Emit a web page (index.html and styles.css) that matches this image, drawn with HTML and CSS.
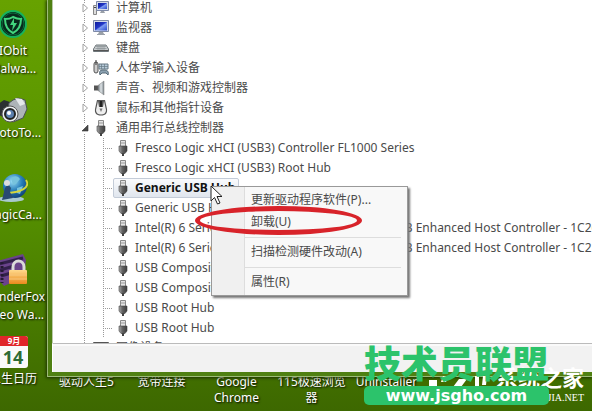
FILE: index.html
```html
<!DOCTYPE html>
<html lang="zh-CN">
<head>
	<meta charset="UTF-8">
	<title>设备管理器</title>
	<link rel="stylesheet" href="styles.css">
</head>
<body>
	<!-- shared device icons -->
	<svg class="defs" aria-hidden="true">
		<defs>
			<linearGradient id="dark" x1="0" x2="1"><stop offset="0" stop-color="#aaa"/><stop offset=".4" stop-color="#666"/><stop offset="1" stop-color="#3c3c3c"/></linearGradient>
			<linearGradient id="screen" x1="0" x2="1" y2="1"><stop offset="0" stop-color="#0a1a9c"/><stop offset=".45" stop-color="#2438c8"/><stop offset=".55" stop-color="#7d9cf0"/><stop offset="1" stop-color="#2b49cf"/></linearGradient>
			<linearGradient id="metal" x1="0" x2="1"><stop offset="0" stop-color="#6d757b"/><stop offset=".5" stop-color="#dfe5e8"/><stop offset="1" stop-color="#7d868c"/></linearGradient>
			<radialGradient id="globe" cx=".4" cy=".3" r=".8"><stop offset="0" stop-color="#9be0f8"/><stop offset=".5" stop-color="#257cb8"/><stop offset="1" stop-color="#0c3267"/></radialGradient>
			<linearGradient id="gold" x2="0" y2="1"><stop offset="0" stop-color="#ffd98c"/><stop offset="1" stop-color="#e98a1c"/></linearGradient>
			<symbol id="usb" viewBox="0 0 16 16">
				<path d="M5.500 .5h5v6h-5z" fill="#e4e4e4" stroke="#8a8a8a"/>
				<path d="M7 2v2M9 2v2" stroke="#999"/>
				<path d="M4 6h8v5l-2 2.500H6L4 11z" fill="url(#dark)" stroke="#444" stroke-width=".6"/>
				<path d="M7 13h2v3H7z" fill="#444"/>
			</symbol>
			<symbol id="monitor" viewBox="0 0 16 16">
				<path d="M.5 .5h15v11H.5z" fill="#d5dbe8" stroke="#7e8aa8"/>
				<path d="M2 2h12v8.500H2z" fill="url(#screen)"/>
				<path d="M6 12h4l1 2h1v1H4v-1h1z" fill="#9aa0a8"/>
			</symbol>
			<symbol id="computer" viewBox="0 0 16 16">
				<path d="M.5 5.500h3v9h-3z" fill="#ddd" stroke="#888"/>
				<path d="M1 7.500h2" stroke="#444"/>
				<path d="M3.500 1.500h12v9h-12z" fill="#d5dbe8" stroke="#7e8aa8"/>
				<path d="M5 3h9v6H5z" fill="url(#screen)"/>
				<path d="M8 11h3l1 2H7z" fill="#9aa0a8"/>
			</symbol>
			<symbol id="keyboard" viewBox="0 0 16 16">
				<path d="M3 5h10l2.500 4v2.500H.5V9z" fill="#c9cdcf" stroke="#6f777b"/>
				<path d="M3 6.500h10M2.500 8.500h11M5 5v5M7 5v5M9 5v5M11 5v5" stroke="#8b9396" stroke-width=".7"/>
				<path d="M.5 10.500h15" stroke="#555"/>
			</symbol>
			<symbol id="hid" viewBox="0 0 16 16">
				<rect x="1" y="2" width="4" height="11" rx="2" fill="#ccc" stroke="#555"/>
				<path d="M3 0v5" stroke="#333"/>
				<path d="M6 4h9v5H6z" fill="#b6c9d8" stroke="#667884"/>
				<path d="M6 6.500h9M8.500 4v5M11.500 4v5" stroke="#667884" stroke-width=".7"/>
				<path d="M7 15c-1-3 0-5 2-5h3c3 0 4 3 3 5l-2-2H9z" fill="#8ca2b1" stroke="#566b78"/>
			</symbol>
			<symbol id="speaker" viewBox="0 0 16 16">
				<path d="M1 5.500h4v5H1z" fill="#555"/>
				<path d="M5 5.500L11 1v14l-6-4.500z" fill="url(#metal)" stroke="#777" stroke-width=".5"/>
			</symbol>
			<symbol id="mouse" viewBox="0 0 16 16">
				<path d="M4 0h8l2 9c.5 4-1 6.500-6 6.500S1.500 13 2 9z" fill="#555"/>
				<path d="M5 1l-2 9c0 3 2 4.500 5 4.500s5-1.500 5-4.500l-2-9-1 6H6z" fill="#eee"/>
				<path d="M7 1h2v6H7z" fill="#222"/>
				<path d="M6.500 8.500h3L8 12z" fill="#777"/>
			</symbol>
			<symbol id="card" viewBox="0 0 16 16">
				<path d="M0 2h16l-2 4H2z" fill="#555"/>
			</symbol>
			<symbol id="closed" viewBox="0 0 9 10"><path d="M2 1v8l4.500-4z" fill="#fff" stroke="#a0a0a0"/></symbol>
			<symbol id="open" viewBox="0 0 9 10"><path d="M7 2v6H1z" fill="#484848" stroke="#333" stroke-width=".6"/></symbol>
		</defs>
	</svg>

	<main class="desktop">
		<aside class="shortcuts">
			<a class="shortcut" href="#">
				<svg viewBox="0 0 36 36"><circle cx="18" cy="18" r="13" fill="#08291c" stroke="#16b35c" stroke-width="2"/><circle cx="18" cy="18" r="11" fill="none" stroke="#0c6b3c"/><path d="M10 13q5 0 8-2 4 2 8 2 0 10-8 14-8-4-8-14z" fill="none" stroke="#42d57d" stroke-width="2"/><path d="M19 12l-4 7h3l-1 6 5-8h-3z" fill="#42d57d"/></svg>
				<span>IObit Malwa...</span>
			</a>
			<a class="shortcut" href="#">
				<svg viewBox="0 0 36 36"><path d="M2 17l7-5 9 3v14l-8 1-8-4z" fill="#2c3032"/><path d="M14 15l4-3 5-2 7 2 2 9-4 9-10 4-6-5z" fill="#aeb4b8" stroke="#4a5054"/><path d="M20 10l7 1 3 5-5 2z" fill="#e5e8ea"/><circle cx="15" cy="26" r="8" fill="#eceff1" stroke="#555"/><circle cx="15" cy="26" r="5" fill="#5b7fae" stroke="#222" stroke-width="2"/><circle cx="14" cy="25" r="2" fill="#fff"/></svg>
				<span>PhotoTo...</span>
			</a>
			<a class="shortcut" href="#">
				<svg viewBox="0 0 36 36"><ellipse cx="16" cy="29" rx="13" ry="3" fill="#a9c9cf"/><circle cx="20" cy="16" r="12" fill="url(#globe)"/><path d="M16 8q6-4 9 1l-4 5-3 1zM22 18l6-2-3 8-3-1z" fill="#77c3dd"/><path d="M31 10c5 7-5 13-21 13" fill="none" stroke="#d5d63c" stroke-width="2"/><path d="M7 30l3-12 3-4 3 4-1 4 3 6z" fill="#294a72"/><circle cx="12" cy="13" r="3" fill="#ddd"/></svg>
				<span>MagicCa...</span>
			</a>
			<a class="shortcut" href="#">
				<svg viewBox="0 0 36 36"><path d="M2 9l26-7 3 6-2 17-20 9-7-8z" fill="#6a438b"/><path d="M4 12l24-6M5 18l14-4M6 24l10-3" stroke="#32204b" stroke-width="3"/><path d="M7 10v21" stroke="#241933" stroke-width="3" stroke-dasharray="2 2"/><path d="M18 20v-5c0-8 11-8 11 0v5" fill="none" stroke="#dadada" stroke-width="3"/><rect x="14" y="18" width="18" height="14" rx="1" fill="url(#gold)"/><path d="M14 23h18M14 27h18" stroke="#f8c77c"/></svg>
				<span>WonderFox Video Wa...</span>
			</a>
			<a class="shortcut" href="#">
				<svg viewBox="0 0 36 36"><rect x="1" y="2" width="32" height="32" rx="3" fill="#fafafa"/><path d="M4 2h26q3 0 3 3v7H1V5q0-3 3-3z" fill="#e0262a"/><text class="cal-month" x="19" y="10">9月</text><text class="cal-day" x="18" y="30">14</text></svg>
				<span>人生日历</span>
			</a>
		</aside>

		<div class="stage">
			<section class="window">
				<ul class="tree">
					<li class="node"><svg class="arrow"><use href="#closed"/></svg><svg class="device"><use href="#computer"/></svg><span>计算机</span></li>
					<li class="node"><svg class="arrow"><use href="#closed"/></svg><svg class="device"><use href="#monitor"/></svg><span>监视器</span></li>
					<li class="node"><svg class="arrow"><use href="#closed"/></svg><svg class="device"><use href="#keyboard"/></svg><span>键盘</span></li>
					<li class="node"><svg class="arrow"><use href="#closed"/></svg><svg class="device"><use href="#hid"/></svg><span>人体学输入设备</span></li>
					<li class="node"><svg class="arrow"><use href="#closed"/></svg><svg class="device"><use href="#speaker"/></svg><span>声音、视频和游戏控制器</span></li>
					<li class="node"><svg class="arrow"><use href="#closed"/></svg><svg class="device"><use href="#mouse"/></svg><span>鼠标和其他指针设备</span></li>
					<li class="node"><svg class="arrow"><use href="#open"/></svg><svg class="device"><use href="#usb"/></svg><span>通用串行总线控制器</span></li>
					<li class="branch">
						<ul class="children">
							<li class="leaf"><svg class="device"><use href="#usb"/></svg><span>Fresco Logic xHCI (USB3) Controller FL1000 Series</span></li>
							<li class="leaf"><svg class="device"><use href="#usb"/></svg><span>Fresco Logic xHCI (USB3) Root Hub</span></li>
							<li class="leaf"><div class="pick"><svg class="device"><use href="#usb"/></svg><span>Generic USB Hub</span></div></li>
							<li class="leaf"><svg class="device"><use href="#usb"/></svg><span>Generic USB Hub</span></li>
							<li class="leaf"><svg class="device"><use href="#usb"/></svg><span>Intel(R) 6 Series/C200 Series Chipset Family – USB Enhanced Host Controller - 1C26</span></li>
							<li class="leaf"><svg class="device"><use href="#usb"/></svg><span>Intel(R) 6 Series/C200 Series Chipset Family – USB Enhanced Host Controller - 1C2D</span></li>
							<li class="leaf"><svg class="device"><use href="#usb"/></svg><span>USB Composite Device</span></li>
							<li class="leaf"><svg class="device"><use href="#usb"/></svg><span>USB Composite Device</span></li>
							<li class="leaf"><svg class="device"><use href="#usb"/></svg><span>USB Root Hub</span></li>
							<li class="leaf"><svg class="device"><use href="#usb"/></svg><span>USB Root Hub</span></li>
						</ul>
					</li>
					<li class="node"><svg class="arrow"></svg><svg class="device"><use href="#card"/></svg><span>图像设备</span></li>
				</ul>
				<div class="statusbar"></div>
			</section>
			<nav class="dock">
				<a href="#">驱动人生5</a>
				<a href="#">宽带连接</a>
				<a href="#">Google Chrome</a>
				<a href="#">115极速浏览器</a>
				<a href="#">Uninstaller</a>
			</nav>
		</div>
	</main>

	<div class="menu" role="menu">
		<button role="menuitem">更新驱动程序软件(P)...</button>
		<button role="menuitem">卸载(U)</button>
		<hr>
		<button role="menuitem">扫描检测硬件改动(A)</button>
		<hr>
		<button role="menuitem">属性(R)</button>
	</div>
	<div class="ring"></div>
	<svg class="cursor" viewBox="0 0 14 20"><path d="M1 1v15l3.500-3.500 3 6.500 2.500-1-3-6.500H12z" fill="#fff" stroke="#222"/></svg>

	<div class="site">
		<svg class="site-logo" viewBox="0 0 64 16"><path d="M0 9h8v7H0zM14 5h6l-3 6h-5zM30 8h8l-6 8h-8zM46 5h4v11h-4zM54 5h4l-1 9h-4z" fill="#fff"/></svg>
		<div class="site-name">
			<strong>系统之家</strong>
			<small>XITONGZHIJIA.NET</small>
		</div>
	</div>
	<div class="brand">
		<strong>技术员联盟</strong>
		<a href="#">www.jsgho.com</a>
	</div>
</body>
</html>
```

FILE: styles.css
```css
*{
	margin: 0;
	padding: 0;
	box-sizing: border-box;
}
body{
	height: 100vh;
	overflow: hidden;
	position: relative;
	font: 12px/20px "Noto Sans", "Noto Sans CJK SC", sans-serif;
	color: #4a4a4a;
}
ul{
	list-style-type: none;
}
a{
	color: inherit;
	text-decoration: none;
}
.defs{
	position: absolute;
	width: 0;
	height: 0;
}
.desktop{
	display: flex;
	height: 100%;
	background: linear-gradient(#67a200, #559000 50%, #3d6800);
}

/* left column, partly off the screen */
.shortcuts{
	flex: none;
	width: 80px;
	margin-left: -27px;
	margin-right: -5px;
	padding-top: 6px;
}
.shortcut{
	display: block;
	height: 82px;
	padding: 0 4px;
	line-height: 18px;
	text-align: center;
	color: #fff;
	text-shadow: 1px 1px 2px #000;
}
.shortcut svg{
	display: block;
	width: 36px;
	height: 36px;
	margin: 0 auto;
}
.shortcut span{
	display: block;
}
.cal-month{
	font-size: 8px;
	font-weight: bold;
	fill: #fff;
	text-anchor: middle;
	text-shadow: none;
}
.cal-day{
	font-size: 18px;
	font-weight: bold;
	fill: #2d6b35;
	text-anchor: middle;
	text-shadow: none;
}

/* device manager */
.stage{
	flex: 1;
	min-width: 0;
	display: flex;
	flex-direction: column;
}
.window{
	flex: 1;
	min-height: 0;
	position: relative;
	z-index: 1;
	display: flex;
	flex-direction: column;
	overflow: hidden;
	border: solid #4f8012;
	border-width: 0 0 4px 4px;
	background: #fff;
	box-shadow: inset 1px 0 0 #b9c9a8, 0 0 0 1px #9dbb78, -1px 1px 3px 1px #1d3300;
}
.tree{
	flex: 1;
	min-height: 0;
	overflow: hidden;
	margin-top: -2px;
	padding-left: 30px;
	white-space: nowrap;
	background: linear-gradient(#999 50%, transparent 50%) 32px 0/1px 2px repeat-y;
}
.node{
	display: flex;
	align-items: center;
	height: 20px;
}
.arrow{
	width: 9px;
	height: 10px;
	margin-right: 3px;
	margin-left: -1px;
	background: #fff;
}
.device{
	flex: none;
	width: 16px;
	height: 16px;
	margin-right: 4px;
}
.node .device{
	margin-right: 7px;
}
.children{
	margin-left: 21px;
	background: linear-gradient(#999 50%, transparent 50%) 0 0/1px 2px repeat-y;
}
.leaf{
	display: flex;
	align-items: center;
	height: 20px;
}
.leaf::before{
	content: "";
	flex: none;
	width: 10px;
	height: 1px;
	margin-right: 1px;
	background: linear-gradient(90deg, #999 50%, transparent 50%) 0 0/2px 1px;
}
.leaf > .device{
	margin-left: 1px;
}
.pick{
	display: flex;
	align-items: center;
	height: 20px;
	padding-right: 3px;
	margin-left: -1px;
	border: 1px solid #c4ccd8;
	border-radius: 2px;
	background: linear-gradient(#fafbfd, #e0e6ee);
	font-weight: bold;
	color: #111;
}
.pick .device{
	margin-left: 1px;
}
.statusbar{
	flex: none;
	height: 29px;
	border-top: 1px solid #bbb;
	border-left: 1px solid #fff;
	background: #f2f2f2;
	box-shadow: inset 0 2px 0 #fafafa;
}

.dock{
	flex: none;
	display: flex;
	height: 35px;
	padding-left: 1px;
	line-height: 16px;
	text-align: center;
	color: #fff;
	text-shadow: 1px 1px 2px #000;
}
.dock a{
	width: 75px;
	margin-top: -2px;
	padding: 0 2px;
}

/* context menu */
.menu{
	position: absolute;
	z-index: 2;
	left: 211px;
	top: 186px;
	width: 197px;
	padding: 2px 6px 2px 33px;
	border: 1px solid #999;
	background: linear-gradient(90deg, #f0f0f0 32px, #ddd 32px, #ddd 33px, #f8f8f8 33px);
	box-shadow: 2px 2px 2px #777;
}
.menu button{
	display: block;
	width: 100%;
	height: 22px;
	padding-left: 6px;
	border: 0;
	background: none;
	font: inherit;
	color: inherit;
	text-align: left;
}
.menu hr{
	margin: 4px 0 3px;
	border: 0;
	border-top: 1px solid #ddd;
}
.ring{
	position: absolute;
	z-index: 3;
	left: 195px;
	top: 206px;
	width: 167px;
	height: 29px;
	border: 5px solid #d8232a;
	border-radius: 50%;
}
.cursor{
	position: absolute;
	z-index: 3;
	left: 210px;
	top: 185px;
	width: 14px;
	height: 20px;
}

/* watermarks */
.site{
	position: absolute;
	z-index: 2;
	right: 8px;
	bottom: 4px;
	display: flex;
	text-align: right;
	color: #fff;
}
.site-logo{
	width: 64px;
	height: 16px;
	margin-top: 6px;
}
.site strong{
	display: block;
	font-size: 22px;
	line-height: 24px;
}
.site small{
	display: block;
	font: 10px/18px "Liberation Serif", serif;
}
.brand{
	position: absolute;
	z-index: 3;
	left: 364px;
	bottom: 6px;
	width: 185px;
	text-align: center;
}
.brand strong{
	display: block;
	font-size: 37px;
	font-weight: 900;
	line-height: 44px;
	white-space: nowrap;
	color: #2cc36b;
}
.brand a{
	display: block;
	border-radius: 5px;
	background: #2cc36b;
	font: bold 16px/19px "DejaVu Sans", sans-serif;
	color: #fff;
}
```
